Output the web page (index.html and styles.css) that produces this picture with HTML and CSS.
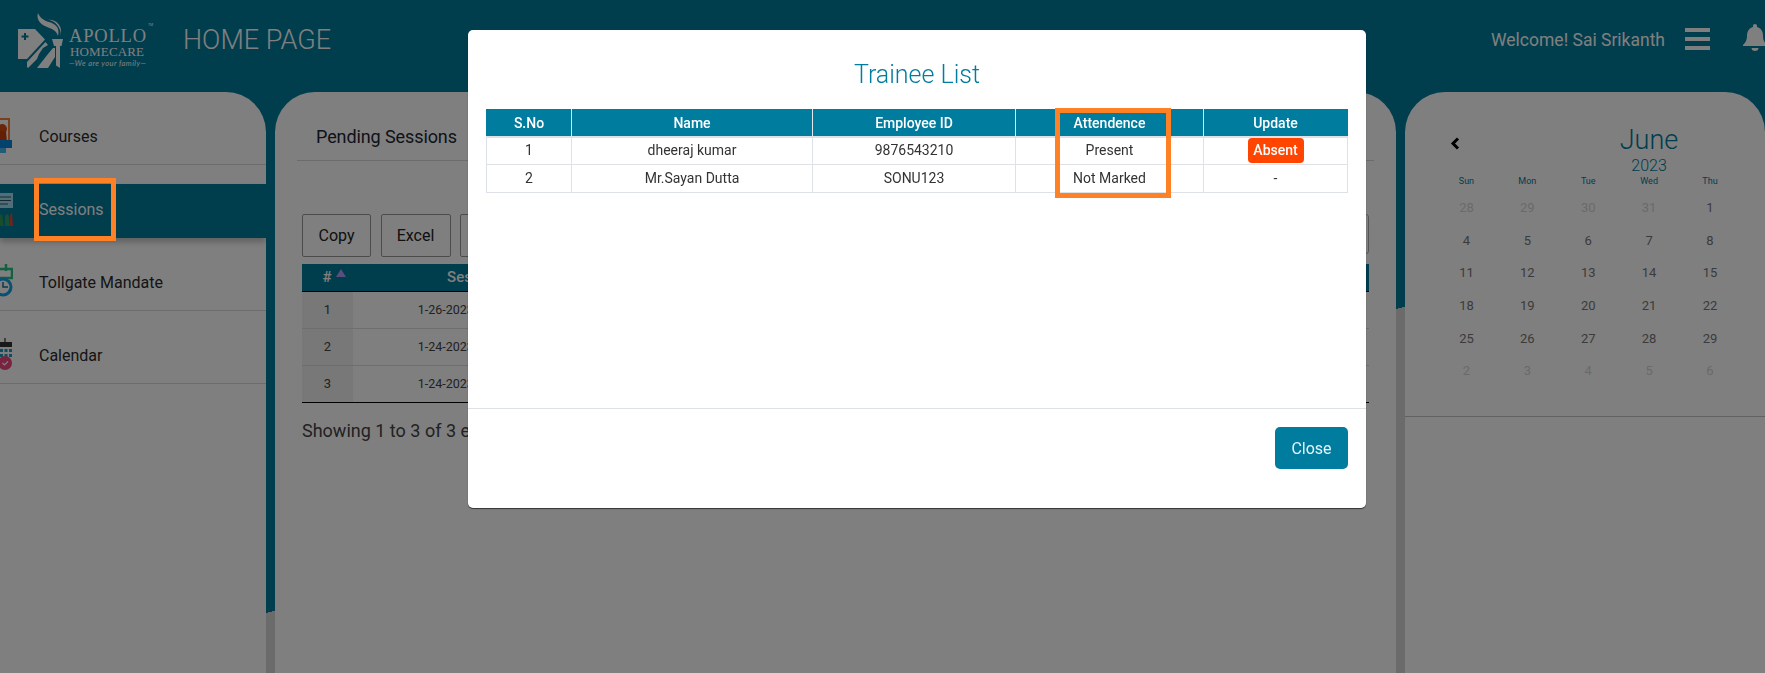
FILE: index.html
```html
<!DOCTYPE html>
<html lang="en">
<head>
<meta charset="utf-8">
<title>Home Page</title>
<link rel="stylesheet" href="styles.css">
</head>
<body>
<div class="app">
  <header class="topbar">
    <svg class="logo" viewBox="0 0 140 62" aria-label="Apollo Homecare">
      <path class="logo-w" d="M0 17H17L27 27.500 9 47H0Z"/>
      <path class="logo-t" d="M3.500 24.500H10.500M7 21V28" />
      <path class="logo-w" d="M9 50 27.500 30 30 33 25 36 21 42 19 47 10 56 9 55Z"/>
      <path class="logo-w" d="M19 56 30 42 35 36H37V45L30 56Z"/>
      <path class="logo-w" d="M34 27H45L43.500 34H42V56L38 53.500V34H36Z"/>
      <path class="logo-w" d="M20 1C18 7 22 12 28 14.500 34 17 38 18 40 24 42 16 38 12 31 10 26 8.500 22 6 20 1Z"/>
      <path class="logo-w" d="M28 7.500C34 8 39 11 41 16 43 19 43 22 42 25 45 18 42 10 34 8Z"/>
      <text class="logo-a" x="51" y="29.500" textLength="77">APOLLO</text>
      <text class="logo-tm" x="130" y="14">TM</text>
      <text class="logo-h" x="52" y="43.500" textLength="74">HOMECARE</text>
      <text class="logo-f" x="51" y="53.500" textLength="77">—We are your family—</text>
    </svg>
    <h1 class="page-title">HOME PAGE</h1>
    <span class="welcome">Welcome! Sai Srikanth</span>
    <svg class="burger" viewBox="0 0 25 22"><path d="M0 0H25V4H0ZM0 9H25V13H0ZM0 18H25V22H0Z"/></svg>
    <svg class="bell" viewBox="0 0 24 27"><path d="M12 0c1.300 0 2 .9 2 2v1c4 1 6 4.500 6 8.500 0 5 1.500 7 4 9.500v1H0v-1c2.500-2.500 4-4.500 4-9.500C4 7.500 6 4 10 3V2c0-1.100.7-2 2-2Z"/><path d="M8.500 24h7c0 2-1.500 3-3.500 3s-3.500-1-3.500-3Z"/></svg>
  </header>

  <main class="columns">
    <nav class="card sidebar">
      <div class="nav-row">
        <svg class="nav-icon" viewBox="0 0 13 36">
          <rect x="-6" y="1" width="15" height="22" fill="#fff" stroke="#f08038" stroke-width="2"/>
          <circle cx="2" cy="11" r="5" fill="#d64a10"/>
          <path d="M-2 13 -3 24H7L6 13Z" fill="#c9400c"/>
          <path d="M-6 22H12V30H-6Z" fill="#0a86d8"/>
          <path d="M-6 30H6V35H-6Z" fill="#45b8f0"/>
        </svg>
        <span>Courses</span>
      </div>
      <div class="nav-row nav-row-active">
        <div class="nav-band">
          <svg class="nav-icon" viewBox="0 0 13 36">
            <rect x="-5" y="0" width="18" height="15" fill="#9fe0f5"/>
            <path d="M0 4H11M0 7.500H11M0 11H8" stroke="#30525e" stroke-width="1"/>
            <path d="M-1 33V23L2 21 4 33Z" fill="#2e9a4e"/>
            <path d="M5 33V23L7 21 9 23V33Z" fill="#3ab060" opacity=".7"/>
            <path d="M9 33 10 22 12 20 13 33Z" fill="#e0463c"/>
          </svg>
          <span class="nav-band-label">Sessions</span>
        </div>
      </div>
      <div class="nav-row">
        <svg class="nav-icon" viewBox="0 0 13 36">
          <path d="M-4 5H12V14H-4" fill="none" stroke="#25c283" stroke-width="2.500"/>
          <path d="M6 0V7" stroke="#25c283" stroke-width="2.500"/>
          <circle cx="3" cy="23" r="8" fill="none" stroke="#14a0e0" stroke-width="3"/>
          <path d="M3 18V23H8" fill="none" stroke="#1c6c90" stroke-width="1.500"/>
        </svg>
        <span>Tollgate Mandate</span>
      </div>
      <div class="nav-row">
        <svg class="nav-icon" viewBox="0 0 13 36">
          <path d="M-4 5H12V10H-4Z" fill="#333"/>
          <path d="M5 1V5" stroke="#555" stroke-width="1.500"/>
          <path d="M0 12h3v3H0ZM4.500 12h3v3h-3ZM9 12h3v3H9ZM0 17h3v3H0ZM4.500 17h3v3h-3ZM9 17h3v3H9Z" fill="#1a9cc0"/>
          <circle cx="5" cy="26" r="7" fill="#f0497e"/>
          <path d="M2.500 26 4.500 28 8 24.500" fill="none" stroke="#fff" stroke-width="1.200"/>
        </svg>
        <span>Calendar</span>
      </div>
    </nav>

    <section class="card content">
      <div class="tab-bar"><span class="tab">Pending Sessions</span></div>
      <div class="tools">
        <div class="tool-buttons">
          <button class="dt-btn">Copy</button>
          <button class="dt-btn">Excel</button>
          <button class="dt-btn">CSV</button>
        </div>
        <input class="dt-search" type="text" aria-label="Search">
      </div>
      <table class="dt">
        <thead>
          <tr><th class="dt-no"><span class="hash">#</span><i class="sort"></i></th><th class="dt-date">Session Date</th><th></th></tr>
        </thead>
        <tbody>
          <tr><td class="dt-no">1</td><td class="dt-when">1-26-2023 10:00:00 AM</td><td></td></tr>
          <tr><td class="dt-no">2</td><td class="dt-when">1-24-2023 10:00:00 AM</td><td></td></tr>
          <tr><td class="dt-no">3</td><td class="dt-when">1-24-2023 10:00:00 AM</td><td></td></tr>
        </tbody>
      </table>
      <p class="dt-info">Showing 1 to 3 of 3 entries</p>
    </section>

    <aside class="card agenda">
      <div class="calendar">
        <div class="cal-head">
          <svg class="cal-prev" viewBox="0 0 10 13"><path d="M8 1.500 3 6.500 8 11.500" fill="none" stroke="#000" stroke-width="3"/></svg>
          <div class="cal-title"><div class="cal-month">June</div><div class="cal-year">2023</div></div>
        </div>
        <div class="cal-grid">
          <span class="dow">Sun</span><span class="dow">Mon</span><span class="dow">Tue</span><span class="dow">Wed</span><span class="dow">Thu</span>
          <span class="day off">28</span><span class="day off">29</span><span class="day off">30</span><span class="day off">31</span><span class="day">1</span>
          <span class="day">4</span><span class="day">5</span><span class="day">6</span><span class="day">7</span><span class="day">8</span>
          <span class="day">11</span><span class="day">12</span><span class="day">13</span><span class="day">14</span><span class="day">15</span>
          <span class="day">18</span><span class="day">19</span><span class="day">20</span><span class="day">21</span><span class="day">22</span>
          <span class="day">25</span><span class="day">26</span><span class="day">27</span><span class="day">28</span><span class="day">29</span>
          <span class="day off">2</span><span class="day off">3</span><span class="day off">4</span><span class="day off">5</span><span class="day off">6</span>
        </div>
      </div>
    </aside>
  </main>
</div>

<div class="backdrop">
  <div class="modal">
    <h2 class="modal-title">Trainee List</h2>
    <div class="modal-body">
      <table class="trainees">
        <thead>
          <tr><th class="c1">S.No</th><th class="c2">Name</th><th class="c3">Employee ID</th><th class="c4">Attendence</th><th class="c5">Update</th></tr>
        </thead>
        <tbody>
          <tr><td>1</td><td>dheeraj kumar</td><td>9876543210</td><td>Present</td><td><span class="badge">Absent</span></td></tr>
          <tr><td>2</td><td>Mr.Sayan Dutta</td><td>SONU123</td><td>Not Marked</td><td>-</td></tr>
        </tbody>
      </table>
    </div>
    <div class="modal-foot"><button class="close-btn">Close</button></div>
  </div>
  <div class="mark mark-sessions"></div>
  <div class="mark mark-attendance"></div>
</div>
</body>
</html>
```

FILE: styles.css
```css
* { box-sizing: border-box; }
html, body { margin: 0; height: 100%; overflow: hidden; }
body { font-family: Roboto, "Liberation Sans", sans-serif; color: #333; }

.app {
  width: 1765px;
  height: 673px;
  overflow: hidden;
  background: linear-gradient(344.94deg, #d6d6d6 447.3px, #007a9b 447.3px);
}

/* top bar */
.topbar { height: 92px; display: flex; align-items: flex-start; color: #fff; }
.logo { width: 140px; height: 62px; margin: 12px 0 0 18px; flex: none; }
.logo-w { fill: #fff; }
.logo-t { fill: none; stroke: #007a9b; stroke-width: 2; }
.logo-a { font: 400 18.500px "Liberation Serif", serif; fill: #fff; }
.logo-tm { font: 400 3.500px Roboto, sans-serif; fill: #fff; }
.logo-h { font: 400 13px "Liberation Serif", serif; fill: #fff; }
.logo-f { font: italic 400 7.500px Lato, sans-serif; fill: #fff; }
.page-title { margin: 24px 0 0 25px; font-size: 27px; line-height: 32px; font-weight: 300; color: #fff; }
.welcome { margin: 29px 0 0 auto; font-size: 17.500px; line-height: 22px; color: #fff; }
.burger { width: 25px; height: 22px; margin: 28px 0 0 20px; fill: #fff; flex: none; }
.bell { width: 24px; height: 27px; margin: 24px -2px 0 33px; fill: #fff; flex: none; }

/* columns */
.columns { display: grid; grid-template-columns: 266px 1121px 360px; gap: 9px; height: 581px; }
.card { background: #fff; border-radius: 40px 40px 0 0; overflow: hidden; }

/* sidebar */
.sidebar { border-top-left-radius: 0; }
.nav-row {
  height: 73px;
  padding-top: 16px;
  display: flex;
  align-items: center;
  gap: 26px;
  border-bottom: 1px solid #d9d9d9;
  font-size: 16px;
  color: #2b2b2b;
}
.nav-row-active { display: block; border-bottom: 0; padding-top: 19px; color: #fff; }
.nav-band {
  height: 54px;
  background: #007a9b;
  display: flex;
  align-items: center;
  gap: 26px;
  box-shadow: 0 4px 6px rgba(0, 0, 0, .25);
}
.nav-band-label { padding-bottom: 3px; }
.nav-icon { width: 13px; height: 36px; flex: none; }

/* content */
.content { padding: 0 27px; }
.tab-bar { height: 69px; margin: 0 -5px; padding: 33px 0 0 19px; border-bottom: 1px solid #d9d9d9; }
.tab { font-size: 18px; line-height: 24px; letter-spacing: -.1px; color: #1d2733; display: block; }
.tools { display: flex; justify-content: space-between; margin-top: 53px; height: 43px; }
.tool-buttons { display: flex; gap: 9.500px; }
.dt-btn {
  width: 70px;
  height: 43px;
  background: #fff;
  border: 1px solid #999;
  border-radius: 2px;
  font: 400 16px Roboto, sans-serif;
  color: #222;
}
.dt-btn:first-child { width: 69px; }
.dt-search { width: 230px; height: 40px; border: 1px solid #aaa; border-radius: 3px; background: #fff; }
.dt { width: 100%; margin-top: 7px; border-collapse: collapse; font-size: 13px; border-bottom: 1px solid #000; }
.dt th {
  height: 27px;
  background: #007a9b;
  color: #fff;
  font-size: 15px;
  font-weight: 500;
  text-align: center;
  border-bottom: 1px solid #000;
  padding: 0;
}
.dt td { height: 37px; padding: 0; text-align: center; color: #444; border-top: 1px solid #ddd; }
.dt tbody tr:first-child td { border-top: 0; }
.dt .dt-no { width: 51px; }
.dt td.dt-no { background: #f1f1f1; }
.dt td.dt-when { font-size: 12.500px; padding-right: 17px; }
.dt-date { width: 276px; }
.hash { margin-left: 13px; }
.sort {
  display: inline-block;
  width: 0;
  height: 0;
  margin-left: 4px;
  border: 5px solid transparent;
  border-top: 0;
  border-bottom: 8px solid #b49cff;
  vertical-align: 5px;
}
.dt-info { margin: 17px 0 0; font-size: 18px; line-height: 22px; color: #444; }

/* calendar */
.calendar { height: 325px; border-bottom: 1px solid #c4c4c4; padding: 31px 0 0 31px; width: 360px; }
.cal-head { width: 426px; display: grid; grid-template-columns: 61px 1fr 61px; }
.cal-prev { width: 10px; height: 13px; margin: 14px 0 0 14px; }
.cal-title { text-align: center; color: #007a9b; font-weight: 300; }
.cal-month { font-size: 27px; line-height: 35px; }
.cal-year { font-size: 16px; line-height: 20px; margin-top: -2px; }
.cal-grid {
  width: 304.500px;
  display: grid;
  grid-template-columns: repeat(5, 60.900px);
  grid-template-rows: 17px;
  grid-auto-rows: 32.700px;
  margin-top: -2px;
  text-align: center;
}
.dow { font-size: 9px; line-height: 10px; color: #007a9b; height: 17px; padding-top: 2px; }
.day { font-size: 13px; line-height: 33px; color: #777; }
.day.off { color: #d4d4d4; }

/* modal */
.backdrop { position: fixed; inset: 0; background: rgba(0, 0, 0, .5); }
.modal {
  width: 898px;
  height: 478px;
  margin: 30px 0 0 468px;
  background: #fff;
  border-radius: 5px;
  display: flex;
  flex-direction: column;
  box-shadow: 0 1px 1px rgba(0, 0, 0, .6);
}
.modal-title { margin: 0; height: 79px; padding-top: 30px; text-align: center; font-size: 25px; line-height: 30px; font-weight: 300; color: #007c9f; }
.modal-body { flex: 1; padding: 0 18px; border-bottom: 1px solid #dee2e6; }
.trainees { width: 861px; table-layout: fixed; border-collapse: collapse; font-size: 14px; color: #333; }
.trainees th {
  height: 27px;
  padding: 0;
  background: #007c9f;
  color: #fff;
  font-weight: 500;
  border: 1px solid #e4e7ec;
  border-top-color: #007c9f;
  border-bottom: 2px solid #dee2e6;
}
.trainees th:first-child { border-left-color: #007c9f; }
.trainees th:last-child { border-right-color: #007c9f; }
.trainees td { height: 28px; padding: 0 0 1px; text-align: center; border: 1px solid #dee2e6; }
.c1 { width: 85px; }
.c2 { width: 241px; }
.c3 { width: 203px; }
.c4 { width: 188px; }
.c5 { width: 144px; }
.badge { display: inline-block; width: 56px; height: 25px; line-height: 25px; background: #ff4500; color: #fff; font-weight: 500; border-radius: 4px; }
.modal-foot { height: 99px; padding: 18px 18px 0; display: flex; justify-content: flex-end; align-items: flex-start; }
.close-btn { width: 73px; height: 42px; background: #007c9f; color: #e6f6fb; border: 0; border-radius: 5px; font: 400 16px Roboto, sans-serif; }

/* annotation frames */
.mark { position: absolute; border: 5px solid #ff8125; }
.mark-sessions { left: 34px; top: 178px; width: 82px; height: 63px; }
.mark-attendance { left: 1055px; top: 108px; width: 116px; height: 90px; }
```
